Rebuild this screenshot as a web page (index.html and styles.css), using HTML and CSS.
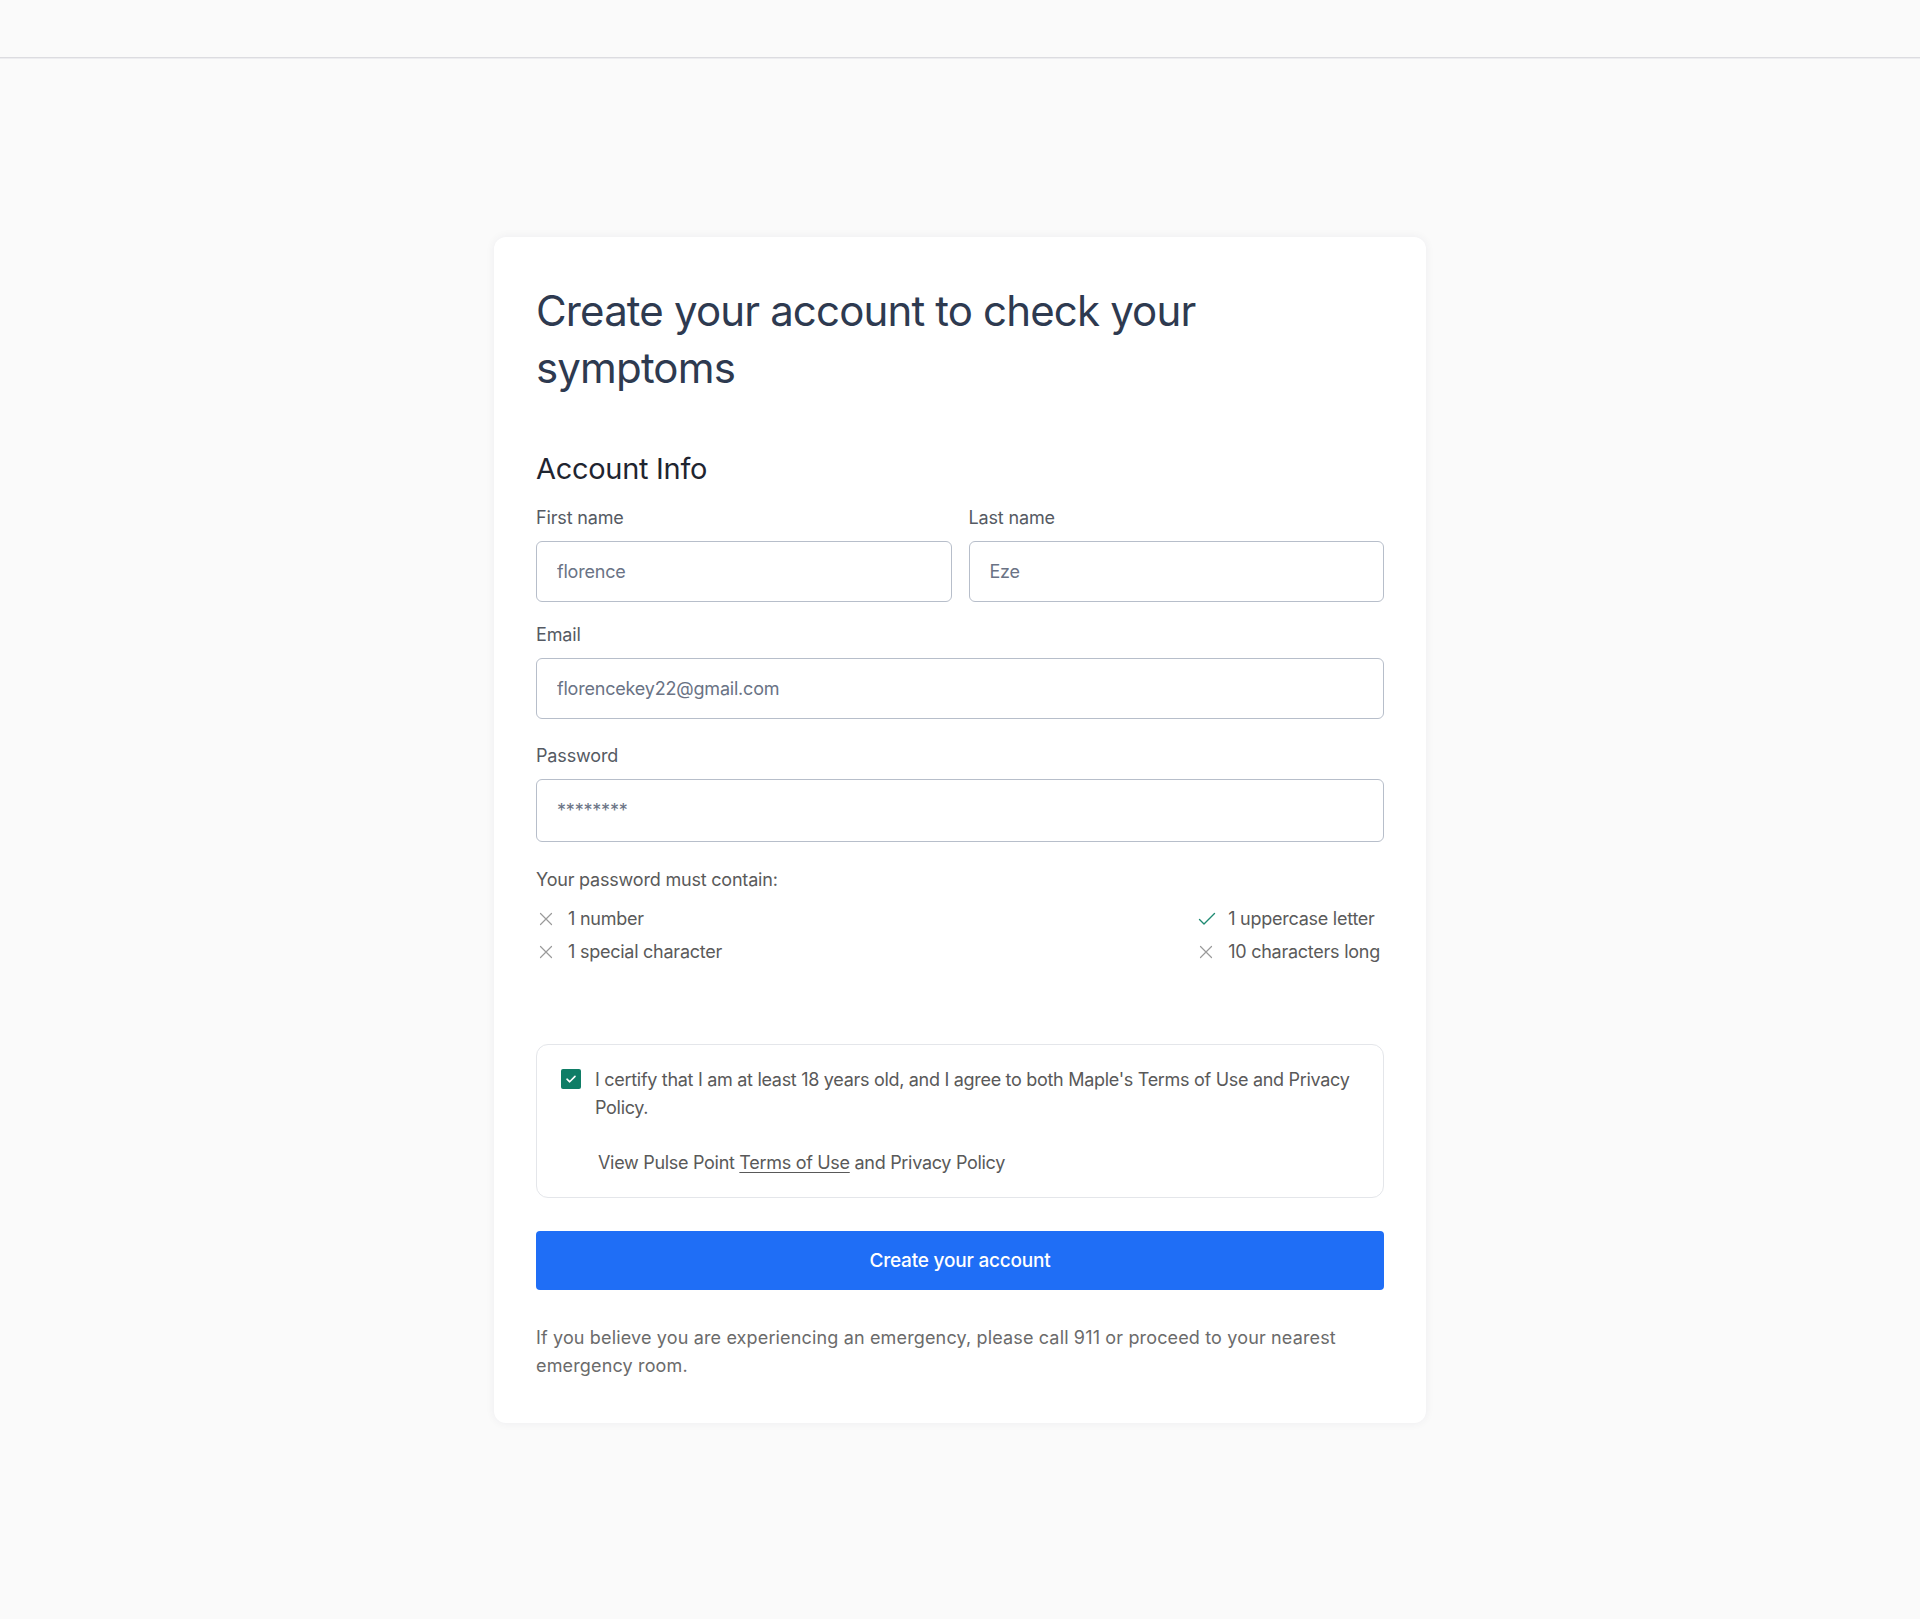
FILE: index.html
```html
<!DOCTYPE html>
<html lang="en">
<head>
<meta charset="utf-8">
<title>Create your account</title>
<link rel="stylesheet" href="styles.css">
</head>
<body>
<header class="topbar"></header>
<main class="page">
  <section class="card">
    <h1 class="title">Create your account to check your symptoms</h1>
    <h2 class="subtitle">Account Info</h2>
    <div class="row">
      <div class="field">
        <label class="label">First name</label>
        <input class="input" type="text" value="florence">
      </div>
      <div class="field">
        <label class="label">Last name</label>
        <input class="input" type="text" value="Eze">
      </div>
    </div>
    <div class="field field-email">
      <label class="label">Email</label>
      <input class="input" type="text" value="florencekey22@gmail.com">
    </div>
    <div class="field field-pass">
      <label class="label">Password</label>
      <input class="input input-pass" type="text" value="********">
    </div>
    <p class="rules-title">Your password must contain:</p>
    <div class="rules">
      <ul class="rule-col">
        <li class="rule"><svg class="ico" viewBox="0 0 16 16"><path d="M2.5 2.5 13.5 13.5M13.5 2.5 2.5 13.5" stroke="#9a9a9a" stroke-width="1.2" fill="none" stroke-linecap="round"/></svg>1 number</li>
        <li class="rule"><svg class="ico" viewBox="0 0 16 16"><path d="M2.5 2.5 13.5 13.5M13.5 2.5 2.5 13.5" stroke="#9a9a9a" stroke-width="1.2" fill="none" stroke-linecap="round"/></svg>1 special character</li>
      </ul>
      <ul class="rule-col">
        <li class="rule"><svg class="ico ico-check" viewBox="0 0 18 16"><path d="M1.5 8.5 6 13 16.5 2.5" stroke="#1f8a72" stroke-width="1.4" fill="none" stroke-linecap="round" stroke-linejoin="round"/></svg>1 uppercase letter</li>
        <li class="rule"><svg class="ico" viewBox="0 0 16 16"><path d="M2.5 2.5 13.5 13.5M13.5 2.5 2.5 13.5" stroke="#9a9a9a" stroke-width="1.2" fill="none" stroke-linecap="round"/></svg>10 characters long</li>
      </ul>
    </div>
    <div class="consent">
      <div class="consent-main">
        <span class="checkbox"><svg viewBox="0 0 20 20"><path d="M6 10.2 8.7 12.8 14 7.4" stroke="#fff" stroke-width="1.6" fill="none" stroke-linecap="round" stroke-linejoin="round"/></svg></span>
        <p class="consent-text">I certify that I am at least 18 years old, and I agree to both Maple's Terms of Use and Privacy Policy.</p>
      </div>
      <p class="consent-view">View Pulse Point <a class="link" href="#">Terms of Use</a> and Privacy Policy</p>
    </div>
    <button class="btn" type="button">Create your account</button>
    <p class="note">If you believe you are experiencing an emergency, please call 911 or proceed to your nearest emergency room.</p>
  </section>
</main>
</body>
</html>
```

FILE: styles.css
```css
* { box-sizing: border-box; }
html, body { margin: 0; padding: 0; }
body {
  background: #fafafa;
  font-family: Inter, "Noto Sans", sans-serif;
  color: #555;
  min-height: 1619px;
}
.topbar {
  height: 58px;
  border-bottom: 1px solid #dcdce0;
  box-shadow: 0 1px 0 #ededf0;
}
.page {
  display: flex;
  justify-content: center;
  padding-top: 179px;
}
.card {
  width: 932px;
  background: #fff;
  border-radius: 12px;
  box-shadow: 0 0 10px rgba(30, 40, 70, 0.06);
  padding: 45px 42px 43px;
}
.title {
  margin: 0;
  font-size: 42px;
  line-height: 57px;
  font-weight: 400;
  color: #2e3a50;
  letter-spacing: -0.85px;
  max-width: 700px;
}
.subtitle {
  margin: 55px 0 19px;
  font-size: 29px;
  line-height: 36px;
  font-weight: 400;
  color: #1f2530;
  letter-spacing: -0.3px;
}
.row {
  display: grid;
  grid-template-columns: 1fr 1fr;
  gap: 17px;
  margin-bottom: 21px;
}
.field { display: flex; flex-direction: column; }
.field-email { margin-bottom: 25px; }
.label {
  font-size: 18px;
  line-height: 24px;
  color: #555a63;
  margin-bottom: 11px;
  letter-spacing: -0.15px;
}
.input {
  height: 61px;
  border: 1px solid #b7beca;
  border-radius: 6px;
  padding: 0 20px;
  font-family: Inter, "Noto Sans", sans-serif;
  font-size: 18px;
  color: #6a7385;
  background: #fff;
  outline: none;
  letter-spacing: -0.2px;
}
.input-pass { height: 63px; }
.rules-title {
  margin: 26px 0 15px;
  font-size: 18px;
  line-height: 24px;
  color: #5a5a5a;
  letter-spacing: -0.2px;
}
.rules {
  display: flex;
  justify-content: space-between;
  padding-right: 4px;
}
.rule-col {
  list-style: none;
  margin: 0;
  padding: 0;
  display: flex;
  flex-direction: column;
  gap: 9px;
}
.rule {
  display: flex;
  align-items: center;
  gap: 14px;
  font-size: 18px;
  line-height: 24px;
  color: #5a5a5a;
  letter-spacing: -0.25px;
}
.ico { width: 16px; height: 16px; margin-left: 2px; flex: none; }
.ico-check { width: 18px; margin-left: 2px; margin-right: -2px; }
.consent {
  margin-top: 80px;
  border: 1px solid #e4e6ea;
  border-radius: 12px;
  padding: 21px 20px 20px 24px;
}
.consent-main {
  display: flex;
  align-items: flex-start;
  gap: 14px;
}
.checkbox {
  width: 20px;
  height: 20px;
  flex: none;
  margin-top: 3px;
  background: #0f7d66;
  border-radius: 2px;
  display: flex;
}
.checkbox svg { width: 20px; height: 20px; }
.consent-text {
  margin: 0;
  font-size: 18px;
  line-height: 28px;
  color: #595959;
  letter-spacing: -0.3px;
}
.consent-view {
  margin: 27px 0 0 37px;
  font-size: 18px;
  line-height: 28px;
  color: #595959;
  letter-spacing: -0.3px;
}
.link { color: #595959; text-decoration: underline; text-underline-offset: 3px; }
.btn {
  display: block;
  width: 100%;
  height: 59px;
  margin-top: 33px;
  border: none;
  border-radius: 4px;
  background: #1f6ef6;
  color: #fff;
  font-family: Inter, "Noto Sans", sans-serif;
  font-size: 19px;
  font-weight: 500;
  letter-spacing: -0.2px;
}
.note {
  margin: 34px 0 0;
  font-size: 18px;
  line-height: 28px;
  color: #6b6b6b;
  letter-spacing: 0.15px;
}
```
